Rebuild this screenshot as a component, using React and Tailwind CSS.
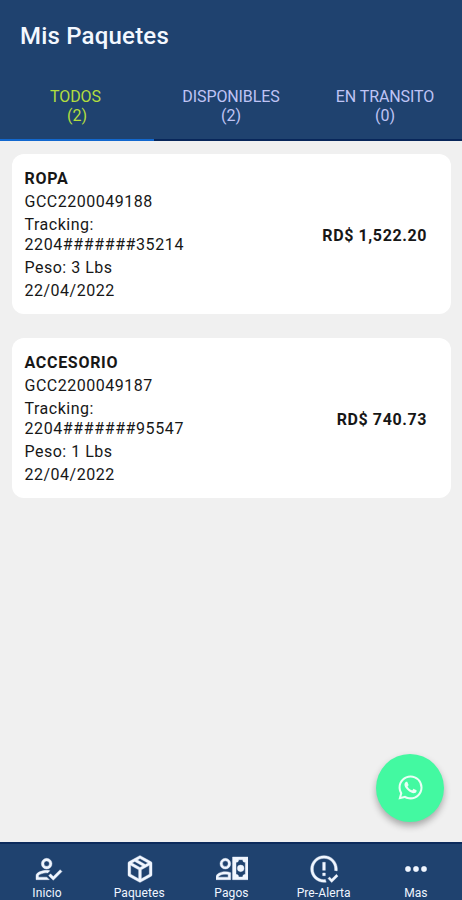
import React from "react";

const tabs = [
  { label: "TODOS", count: 2, active: true },
  { label: "DISPONIBLES", count: 2 },
  { label: "EN TRANSITO", count: 0 },
];

const packages = [
  { name: "ROPA", code: "GCC2200049188", tracking: "2204#######35214", weight: "3 Lbs", date: "22/04/2022", price: "RD$ 1,522.20" },
  { name: "ACCESORIO", code: "GCC2200049187", tracking: "2204#######95547", weight: "1 Lbs", date: "22/04/2022", price: "RD$ 740.73" },
];

const icons = {
  user: (
    <path d="M21.1 12.5l1.4 1.41-6.53 6.59L12.5 17l1.4-1.41 2.07 2.08 5.13-5.17M11 4a4 4 0 1 1 0 8 4 4 0 0 1 0-8m0 2a2 2 0 1 0 0 4 2 2 0 0 0 0-4m0 7c.68 0 1.5.09 2.41.26l-1.67 1.67-.74-.03c-2.97 0-6.1 1.46-6.1 2.1v1.1h6.2L13 20H3v-3c0-2.66 5.33-4 8-4" />
  ),
  box: (
    <path d="M21 16.5c0 .38-.21.71-.53.88l-7.9 4.44c-.16.12-.36.18-.57.18s-.41-.06-.57-.18l-7.9-4.44A1 1 0 0 1 3 16.5v-9c0-.38.21-.71.53-.88l7.9-4.44c.16-.12.36-.18.57-.18s.41.06.57.18l7.9 4.44c.32.17.53.5.53.88v9M12 4.15l-1.89 1.07L16 8.61l1.96-1.11L12 4.15M6.04 7.5L12 10.85l1.96-1.1-5.88-3.4L6.04 7.5M5 15.91l6 3.38v-6.71L5 9.21v6.7m14 0v-6.7l-6 3.37v6.71l6-3.38z" />
  ),
  cash: (
    <path fillRule="evenodd" d="M11 8a4 4 0 1 1-8 0 4 4 0 0 1 8 0M9.1 8a2.1 2.1 0 1 0-4.2 0 2.1 2.1 0 0 0 4.2 0M7 14c1.5 0 2.87.27 4 .72V20H0v-2c0-2.21 3.13-4 7-4M1.9 18v.1h7.2v-2c-.64-.12-1.35-.2-2.1-.2-2.97 0-5.1 1.2-5.1 2.1M12.4 3H24v17H12.4V3M22 7a2 2 0 0 1-2-2h-3a2 2 0 0 1-2 2v9a2 2 0 0 1 2 2h3a2 2 0 0 1 2-2V7zM18.5 9a2.5 2.5 0 0 1 0 5 2.5 2.5 0 0 1 0-5z" />
  ),
  alert: (
    <path d="M11 7h2v6h-2V7m0 8h2v2h-2v-2m9-3c0-4.42-3.58-8-8-8s-8 3.58-8 8 3.58 8 8 8c.36 0 .71-.03 1.06-.08.1.7.31 1.35.62 1.94-.54.1-1.11.14-1.68.14C6.47 22 2 17.5 2 12S6.47 2 12 2s10 4.5 10 10c0 .5-.04.98-.11 1.46a6 6 0 0 0-1.97-.4c.05-.35.08-.7.08-1.06m-2.25 10.16l-2.75-3L16.16 18l1.59 1.59 3.59-3.59 1.16 1.41-4.75 4.75" />
  ),
  more: (
    <path d="M16 12a2 2 0 1 1 4 0 2 2 0 0 1-4 0m-6 0a2 2 0 1 1 4 0 2 2 0 0 1-4 0m-6 0a2 2 0 1 1 4 0 2 2 0 0 1-4 0" />
  ),
};

const nav = [
  { label: "Inicio", icon: "user" },
  { label: "Paquetes", icon: "box" },
  { label: "Pagos", icon: "cash" },
  { label: "Pre-Alerta", icon: "alert" },
  { label: "Mas", icon: "more" },
];

function PackageCard({ item }) {
  return (
    <article className="flex h-40 items-center justify-between rounded-xl bg-white pt-[2px] pr-6 pl-[12.5px] text-[#171717]">
      <div className="flex flex-col gap-[3px] text-base leading-5 tracking-[0.5px]">
        <h2 className="font-bold tracking-[0.7px]">{item.name}</h2>
        <p>{item.code}</p>
        <p>
          Tracking:
          <br />
          <span className="tracking-[0.6px]">{item.tracking}</span>
        </p>
        <p>Peso: {item.weight}</p>
        <p>{item.date}</p>
      </div>
      <p className="pt-px text-base font-bold tracking-[0.6px]">{item.price}</p>
    </article>
  );
}

export default function App() {
  return (
    <div className="relative flex h-[900px] w-[462px] flex-col overflow-hidden bg-[#f0f0f0] font-['Roboto',sans-serif]">
      <header className="bg-[#1f426f]">
        <h1 className="flex h-[72px] items-center pl-5 text-2xl font-medium tracking-[0.2px] text-[#f3f8ff]">Mis Paquetes</h1>
        <div className="grid h-[69px] grid-cols-3">
          {tabs.map((tab) => (
            <button
              key={tab.label}
              className={
                tab.active
                  ? "flex flex-col items-center border-b-2 border-[#1268cf] pt-[15px] text-base leading-[19px] tracking-[-0.1px] text-[#b2dd3f]"
                  : "flex flex-col items-center border-b-2 border-[#08265a] pt-[15px] text-base leading-[19px] tracking-[-0.1px] text-[#bfc4f5]"
              }
            >
              <span className={tab.active ? "pr-[3px]" : ""}>{tab.label}</span>
              <span>({tab.count})</span>
            </button>
          ))}
        </div>
      </header>
      <main className="flex flex-1 flex-col gap-6 pt-[13px] pr-[11px] pl-3">
        {packages.map((item) => (
          <PackageCard key={item.code} item={item} />
        ))}
      </main>
      <button className="absolute right-[18px] bottom-[78px] flex size-[68px] items-center justify-center rounded-full bg-[#43f9a1] pb-[2px] shadow-[0_4px_7px_rgba(0,0,0,0.3)]">
        <svg viewBox="0 0 24 24" className="size-[29px] fill-[#e9fff5]">
          <path d="M12.04 2C6.58 2 2.13 6.45 2.13 11.91c0 1.75.46 3.45 1.32 4.95L2.05 22l5.25-1.38c1.45.79 3.08 1.21 4.74 1.21 5.46 0 9.91-4.45 9.91-9.91 0-2.65-1.03-5.14-2.9-7.01A9.82 9.82 0 0 0 12.04 2m.01 1.67c2.2 0 4.26.86 5.82 2.42a8.23 8.23 0 0 1 2.41 5.83c0 4.54-3.7 8.23-8.24 8.23-1.48 0-2.93-.39-4.19-1.15l-.3-.17-3.12.82.83-3.04-.2-.32a8.19 8.19 0 0 1-1.26-4.38c.01-4.54 3.7-8.24 8.25-8.24M8.53 7.33c-.16 0-.43.06-.66.31-.22.25-.87.86-.87 2.07 0 1.22.89 2.39 1 2.56.14.17 1.76 2.67 4.25 3.73.59.27 1.05.42 1.41.53.59.19 1.13.16 1.56.1.48-.07 1.46-.6 1.67-1.18s.21-1.07.15-1.18c-.07-.1-.23-.16-.48-.27-.25-.14-1.47-.74-1.69-.82-.23-.08-.37-.12-.56.12-.16.25-.64.81-.78.97-.15.17-.29.19-.53.07-.26-.13-1.06-.39-2-1.23-.74-.66-1.23-1.47-1.38-1.72-.12-.24-.01-.39.11-.5.11-.11.27-.29.37-.44.13-.14.17-.25.25-.41.08-.17.04-.31-.02-.43-.06-.11-.56-1.35-.77-1.84-.2-.48-.4-.42-.56-.43-.14 0-.3-.01-.47-.01z" />
        </svg>
      </button>
      <nav className="grid h-[58px] grid-cols-5 border-t-2 border-[#0c2b5c] bg-[#1f426f] pl-px">
        {nav.map((item) => (
          <a key={item.label} className="flex flex-col items-center pt-[9px] text-[#f0f6ff]">
            <svg viewBox="0 0 24 24" className="ml-px size-8 fill-current stroke-current stroke-[0.3]">
              {icons[item.icon]}
            </svg>
            <span className="pt-px text-xs leading-[14px] tracking-[0.1px]">{item.label}</span>
          </a>
        ))}
      </nav>
    </div>
  );
}
